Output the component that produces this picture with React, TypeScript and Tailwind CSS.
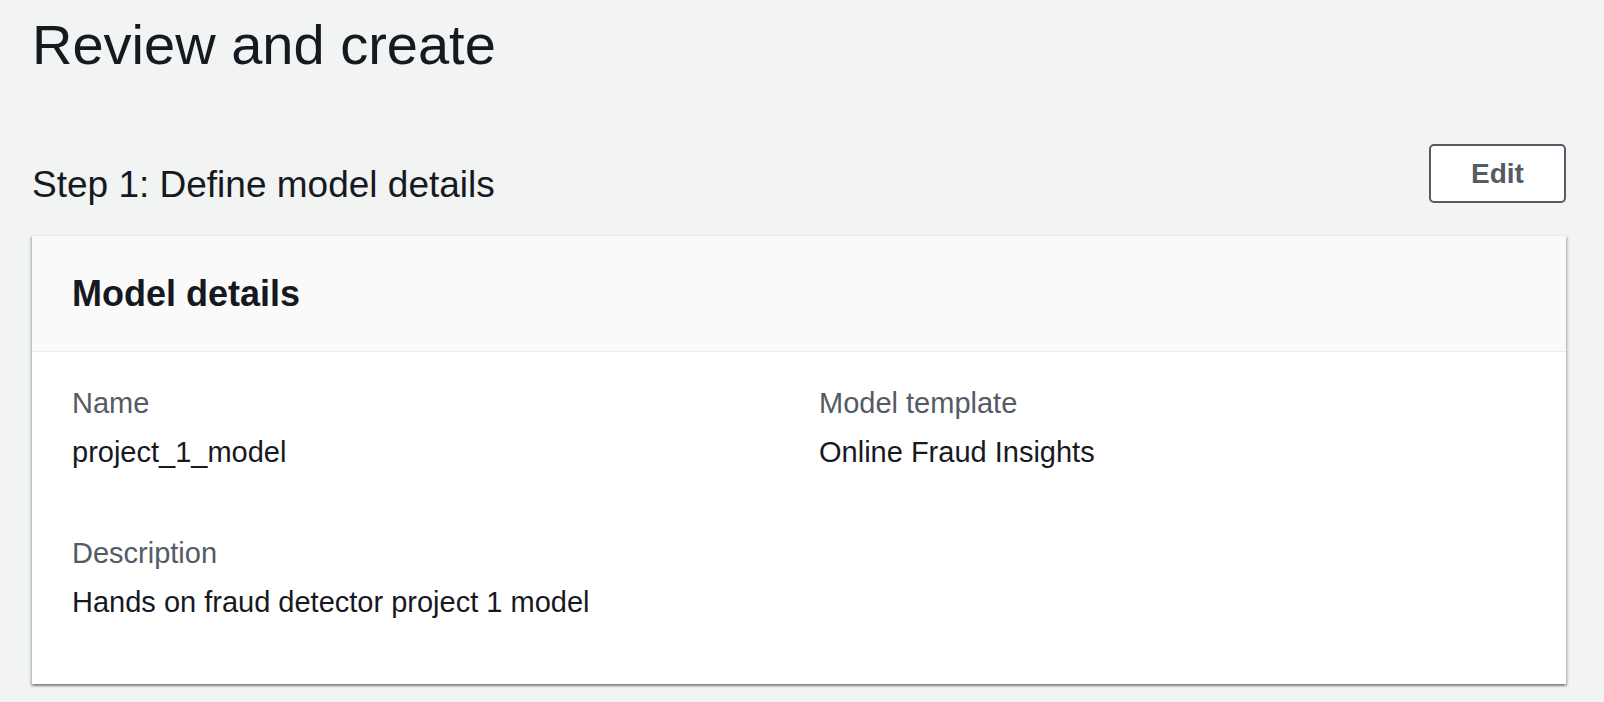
export default function App() {
  const font = { fontFamily: '"Liberation Sans", Arial, sans-serif' }

  return (
    <main className="min-h-[702px] bg-[#f2f3f3] pl-[32px] pr-[38px] text-[#16191f]" style={font}>
      {/* Page title */}
      <h1 className="pt-[17px] text-[56px] font-normal leading-none">Review and create</h1>

      {/* Step header */}
      <div className="mt-[71px] flex h-[59px] items-start justify-between">
        <h2 className="pt-[22px] text-[37px] font-normal leading-none">Step 1: Define model details</h2>
        <button
          type="button"
          className="flex h-[59px] w-[137px] items-center justify-center rounded-[5px] border-2 border-[#545b64] bg-white text-[28px] font-bold text-[#545b64]"
        >
          Edit
        </button>
      </div>

      {/* Model details card */}
      <section className="mt-[32px] border-t border-[#eaeded] bg-white shadow-[0_2px_2px_0_rgba(0,28,36,0.3),2px_2px_2px_0_rgba(0,28,36,0.15),-2px_2px_2px_0_rgba(0,28,36,0.15)]">
        <div className="flex h-[116px] items-center border-b border-[#eaeded] bg-[#fafafa] px-[40px]">
          <h3 className="text-[36px] font-bold leading-none">Model details</h3>
        </div>
        <div className="grid grid-cols-2 gap-x-10 gap-y-[57px] px-[40px] pb-[60px] pt-[29px] text-[29px] leading-[44px]">
          <div className="flex flex-col gap-[5px]">
            <span className="text-[#545b64]">Name</span>
            <span>project_1_model</span>
          </div>
          <div className="flex flex-col gap-[5px]">
            <span className="text-[#545b64]">Model template</span>
            <span>Online Fraud Insights</span>
          </div>
          <div className="flex flex-col gap-[5px]">
            <span className="text-[#545b64]">Description</span>
            <span>Hands on fraud detector project 1 model</span>
          </div>
        </div>
      </section>
    </main>
  )
}
